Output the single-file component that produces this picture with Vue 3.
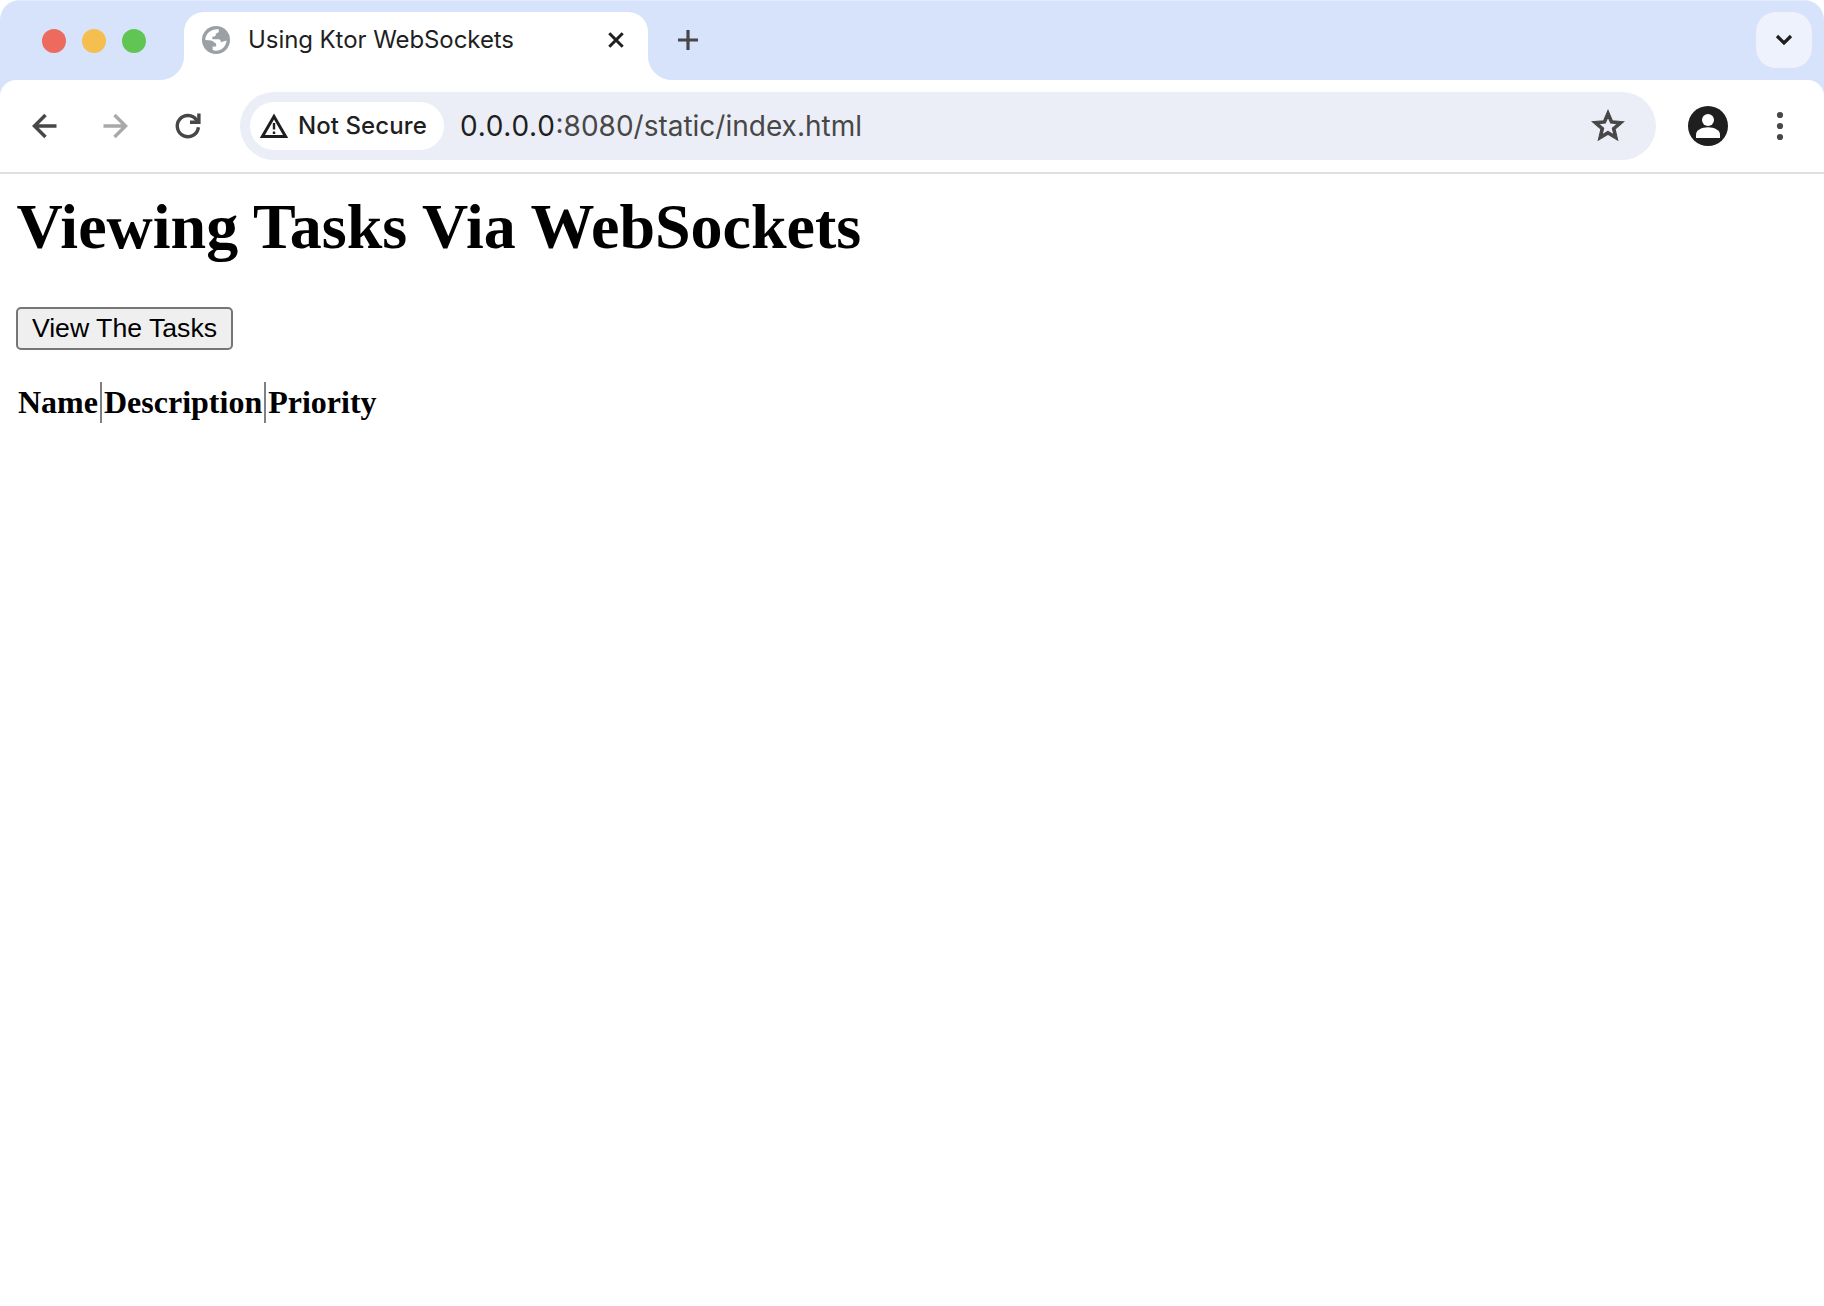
<script setup>
const columns = ['Name', 'Description', 'Priority']
</script>

<template>
  <div class="window">
    <header class="tab-strip">
      <div class="lights">
        <i class="light red"></i>
        <i class="light yellow"></i>
        <i class="light green"></i>
      </div>
      <div class="tab">
        <svg class="globe" width="28" height="28" viewBox="0 0 28 28">
          <circle cx="14" cy="14" r="14" fill="#9aa0a6" />
          <path fill="#fff" d="M16.8 3.3V5c0 1.6-1.2 2.4-3 2.600v1.200c0 1.500-1.200 1.800-3.400 2v2.400h6.200c1.600 0 2.200 1 2.200 3l5.800-1.700c-.4 5.600-4.800 10.200-10.600 10.200-1.300 0-2.300-.2-3.300-.6v-3.500h3.300c.6-1.600.2-3.700-1.700-4-1.300-2-4.300-2.400-9-2.500C3.300 8.200 8.300 2.700 16.800 3.300z" />
        </svg>
        <span class="tab-title">Using Ktor WebSockets</span>
        <svg class="close" width="16" height="16" viewBox="0 0 16 16">
          <path d="M1.300 1.300 14.700 14.700M14.700 1.300 1.300 14.700" stroke="#1f1f1f" stroke-width="3" fill="none" />
        </svg>
      </div>
      <svg class="plus" width="20" height="20" viewBox="0 0 20 20">
        <path d="M0 10H20M10 0V20" stroke="#474747" stroke-width="3.200" />
      </svg>
      <div class="tab-search">
        <svg width="18" height="12" viewBox="0 0 18 12">
          <path d="M2 2 9 9 16 2" stroke="#1f1f1f" stroke-width="3.200" fill="none" />
        </svg>
      </div>
    </header>

    <div class="toolbar">
      <nav class="nav">
        <svg width="36" height="36" viewBox="0 0 36 36" fill="none" stroke="#474747" stroke-width="3.500">
          <path d="M30.500 18H8.500M19.500 7 8.500 18l11 11" />
        </svg>
        <svg width="36" height="36" viewBox="0 0 36 36" fill="none" stroke="#a9a9a9" stroke-width="3.500">
          <path d="M5.500 18H27.500M16.500 7l11 11-11 11" />
        </svg>
        <svg width="36" height="36" viewBox="0 0 36 36" fill="none" stroke="#474747" stroke-width="3.400">
          <path d="M28.400 19.200A10.600 10.600 0 1 1 26.600 12.100L28.600 14" />
          <path d="M28.900 5.500V14.300H20" />
        </svg>
      </nav>
      <div class="omnibox">
        <div class="chip">
          <svg width="30" height="26" viewBox="0 0 30 26">
            <path d="M15 3.500 26.600 23.500H3.400z" fill="none" stroke="#1f1f1f" stroke-width="3" />
            <path d="M15 10V16.500M15 18.500V21" stroke="#1f1f1f" stroke-width="2.400" />
          </svg>
          <span class="chip-text">Not Secure</span>
        </div>
        <span class="url"><b>0.0.0.0</b>:8080/static/index.html</span>
        <svg class="star" width="40" height="40" viewBox="0 0 24 24">
          <path transform="translate(0.720 0.720) scale(0.940)" fill="#474747" stroke="#474747" stroke-width="0.700" d="M22 9.240l-7.190-.62L12 2 9.190 8.630 2 9.240l5.460 4.730L5.820 21 12 17.270 18.180 21l-1.630-7.030L22 9.240zM12 15.400l-3.760 2.270 1-4.280-3.320-2.880 4.380-.38L12 6.100l1.710 4.040 4.380.38-3.320 2.880 1 4.280L12 15.400z" />
        </svg>
      </div>
      <svg class="avatar" width="40" height="40" viewBox="0 0 40 40">
        <circle cx="20" cy="20" r="20" fill="#1f1f1f" />
        <circle cx="20" cy="14" r="6" fill="#fff" />
        <path d="M8 32v-3.500c0-4.500 6-7.300 12-7.300s12 2.800 12 7.300V32z" fill="#fff" />
      </svg>
      <svg class="menu" width="8" height="30" viewBox="0 0 8 30" fill="#474747">
        <circle cx="4" cy="4" r="3.100" />
        <circle cx="4" cy="15" r="3.100" />
        <circle cx="4" cy="26" r="3.100" />
      </svg>
    </div>

    <main class="page">
      <h1>Viewing Tasks Via WebSockets</h1>
      <button type="button">View The Tasks</button>
      <div class="table-head">
        <div v-for="column in columns" :key="column" class="cell">{{ column }}</div>
      </div>
    </main>
  </div>
</template>

<style>
body {
  background: #fff;
}
</style>

<style scoped>
.window {
  width: 1824px;
  height: 1306px;
  overflow: hidden;
  background: linear-gradient(#d7e2fb, #d7e2fb) 0 0 / 100% 100px no-repeat, #fff;
  border-radius: 20px 20px 0 0;
}
svg {
  display: block;
  flex: none;
}
.tab-strip {
  display: flex;
  height: 80px;
  box-sizing: border-box;
  padding: 0 12px 0 42px;
  box-shadow: inset 0 1px #e3ebfc;
}
.lights {
  display: flex;
  gap: 16px;
  width: 142px;
  padding-top: 29px;
}
.light {
  width: 24px;
  height: 24px;
  border-radius: 50%;
}
.red { background: #ec6a5e; }
.yellow { background: #f4bf4f; }
.green { background: #61c554; }
.tab {
  position: relative;
  display: flex;
  align-items: center;
  width: 464px;
  height: 68px;
  box-sizing: border-box;
  margin-top: 12px;
  padding: 0 24px 12px 18px;
  border-radius: 20px 20px 0 0;
  background: #fff;
}
.tab::before,
.tab::after {
  content: '';
  position: absolute;
  bottom: 0;
  width: 24px;
  height: 24px;
}
.tab::before {
  right: 100%;
  background: radial-gradient(circle at 0 0, transparent 23.5px, #fff 24.5px);
}
.tab::after {
  left: 100%;
  background: radial-gradient(circle at 100% 0, transparent 23.5px, #fff 24.5px);
}
.tab-title {
  margin-left: 18px;
  font: 24px/28px Inter, sans-serif;
  letter-spacing: -0.07px;
  color: #1f1f1f;
  white-space: nowrap;
}
.close {
  margin-left: auto;
}
.plus {
  margin: 30px 0 0 30px;
}
.tab-search {
  display: flex;
  align-items: center;
  justify-content: center;
  width: 56px;
  height: 56px;
  margin: 12px 0 0 auto;
  border-radius: 20px;
  background: #edf2fd;
}
.toolbar {
  display: flex;
  align-items: center;
  height: 94px;
  box-sizing: border-box;
  padding: 0 40px 0 26px;
  border-bottom: 2px solid #e0e0e0;
  border-radius: 16px 16px 0 0;
  background: #fff;
}
.nav {
  display: flex;
  gap: 36px;
  width: 214px;
}
.omnibox {
  display: flex;
  align-items: center;
  width: 1416px;
  height: 68px;
  box-sizing: border-box;
  padding: 0 28px 0 10px;
  border-radius: 34px;
  background: #ebeef6;
}
.chip {
  display: flex;
  align-items: center;
  width: 194px;
  height: 48px;
  box-sizing: border-box;
  padding-left: 9px;
  border-radius: 24px;
  background: #fff;
}
.chip-text {
  margin-left: 9px;
  font: 500 24px/28px Inter, sans-serif;
  letter-spacing: 0.08px;
  color: #1f1f1f;
  white-space: nowrap;
}
.url {
  margin-left: 16px;
  font: 28px/34px Inter, sans-serif;
  color: #474747;
  white-space: nowrap;
}
.url b {
  font-weight: 400;
  letter-spacing: 0.7px;
  color: #1f1f1f;
}
.star {
  margin-left: auto;
}
.avatar {
  margin-left: 32px;
}
.menu {
  margin-left: auto;
}
.page {
  display: flex;
  flex-direction: column;
  align-items: flex-start;
  padding: 16px;
  color: #000;
}
h1 {
  margin: 0 0 0 0.5px;
  font: bold 64px/74px "Liberation Serif", serif;
  white-space: nowrap;
}
button {
  width: 217px;
  height: 43px;
  margin-top: 43px;
  padding: 0 0 2px;
  border: 2px solid #767676;
  border-radius: 5px;
  background: #efefef;
  font: 26.67px/36px "Liberation Sans", sans-serif;
  color: #000;
  white-space: nowrap;
}
.table-head {
  display: flex;
  margin-top: 32px;
}
.cell {
  padding: 2px;
  font: bold 32px/37px "Liberation Serif", serif;
}
.cell + .cell {
  border-left: 2px solid #808080;
}
</style>
